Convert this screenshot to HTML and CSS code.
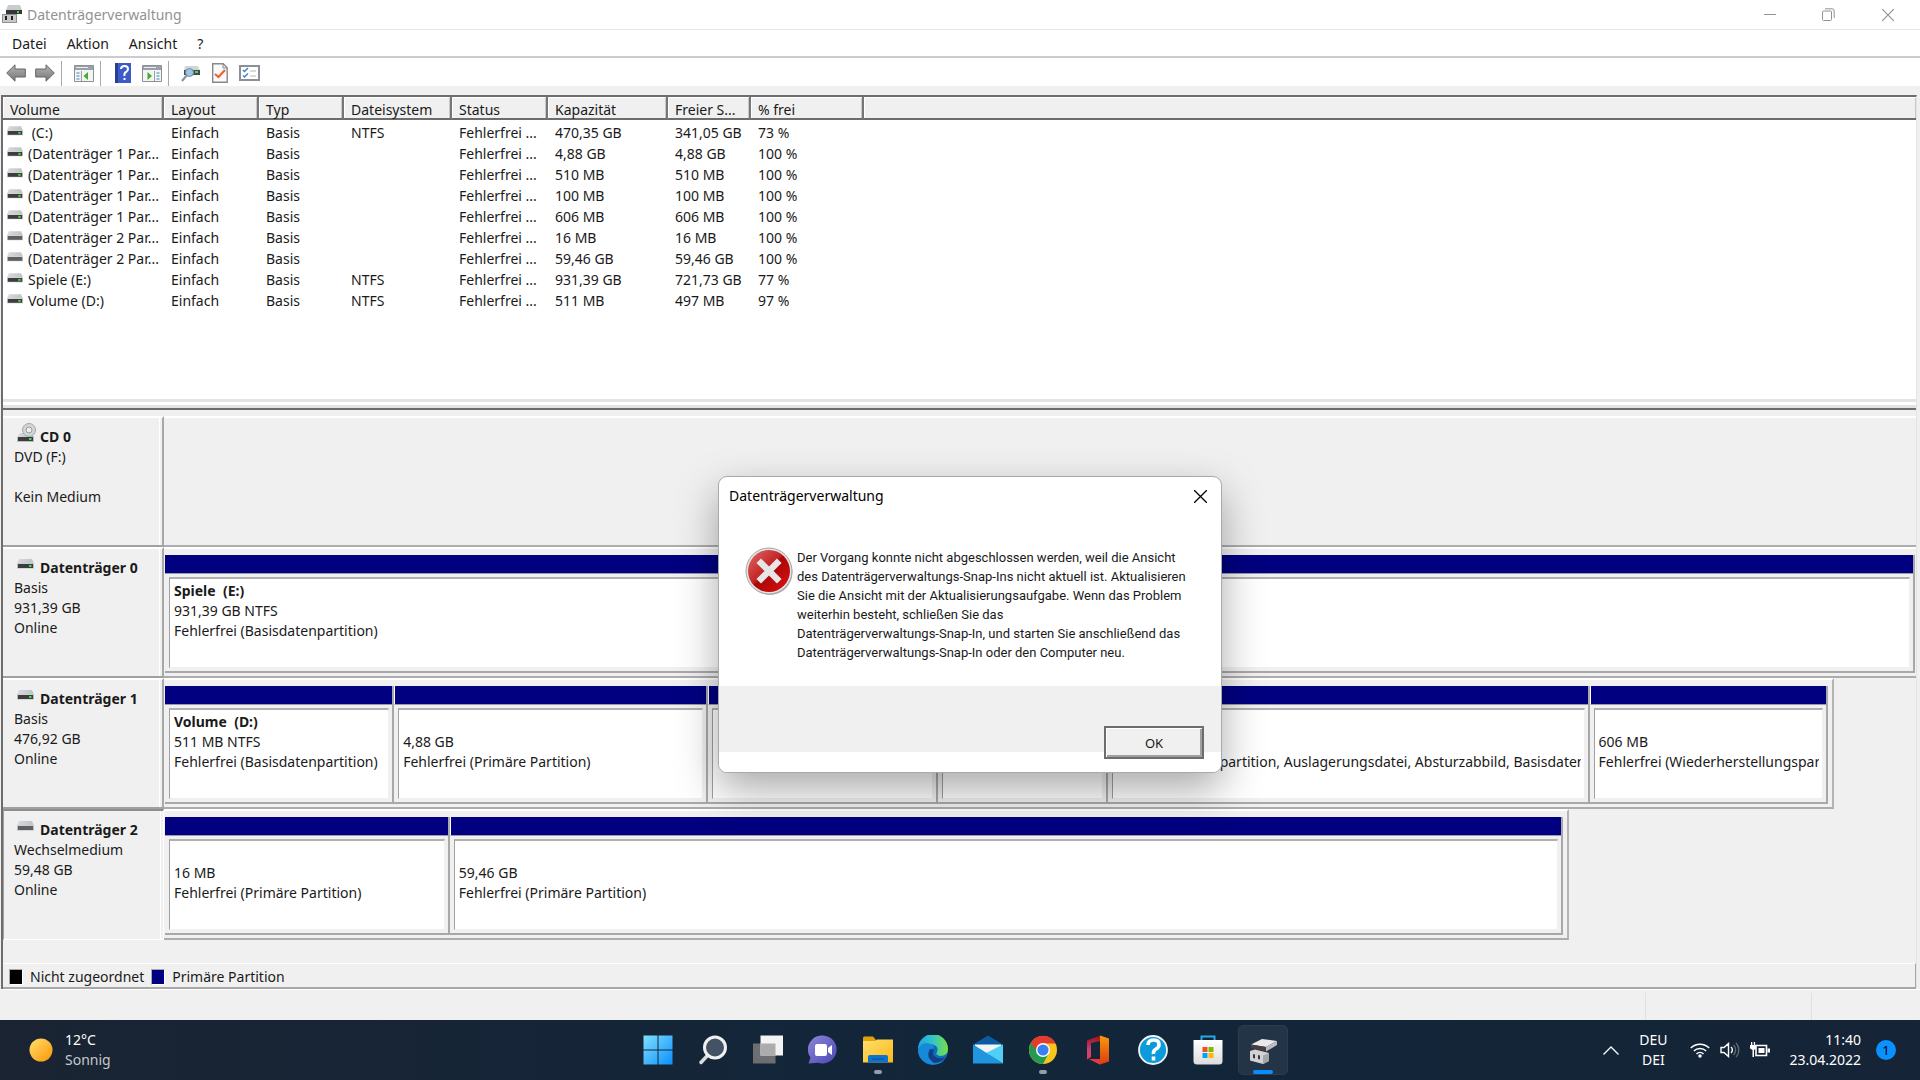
FILE: index.html
```html
<!DOCTYPE html>
<html lang="de">
<head>
  <meta charset="utf-8">
  <meta name="viewport" content="width=device-width, initial-scale=1">
  <title>Datenträgerverwaltung</title>
  <link rel="stylesheet" href="styles.css">
</head>
<body>
  <!-- Shared icons and gradients -->
  <svg class="sprite" aria-hidden="true">
    <defs>
      <linearGradient id="metal" x1="0" y1="0" x2="1" y2="0"><stop offset="0" stop-color="#d8dadd"/><stop offset="1" stop-color="#bfc3c6"/></linearGradient>
      <linearGradient id="arrow" x1="0" y1="0" x2="0" y2="1"><stop offset="0" stop-color="#b4b4b4"/><stop offset="1" stop-color="#777"/></linearGradient>
      <linearGradient id="win" x1="0" y1="0" x2="1" y2="1"><stop offset="0" stop-color="#7fe0ff"/><stop offset="1" stop-color="#0c8ffb"/></linearGradient>
      <linearGradient id="folder" x1="0" y1="0" x2="1" y2="1"><stop offset="0" stop-color="#ffdf70"/><stop offset="1" stop-color="#fbb914"/></linearGradient>
      <linearGradient id="chat" x1="0" y1="0" x2="1" y2="1"><stop offset="0" stop-color="#8b87d8"/><stop offset="1" stop-color="#4c47b5"/></linearGradient>
      <linearGradient id="edge" x1="0" y1="0" x2="1" y2="0"><stop offset="0" stop-color="#1fa5e8"/><stop offset=".5" stop-color="#35c5c5"/><stop offset="1" stop-color="#78e03d"/></linearGradient>
      <linearGradient id="sun" x1="0" y1="0" x2="1" y2="1"><stop offset="0" stop-color="#ffdf6b"/><stop offset="1" stop-color="#fd9507"/></linearGradient>
      <linearGradient id="office" x1="0" y1="0" x2="0" y2="1"><stop offset="0" stop-color="#f99a0c"/><stop offset="1" stop-color="#dc3a12"/></linearGradient>
      <linearGradient id="office2" x1="0" y1="0" x2="0" y2="1"><stop offset="0" stop-color="#9c0d10"/><stop offset=".6" stop-color="#c8437c"/><stop offset="1" stop-color="#f03a4a"/></linearGradient>
      <linearGradient id="error" x1="0" y1="0" x2="1" y2="1"><stop offset="0" stop-color="#e46a6a"/><stop offset=".45" stop-color="#c22424"/><stop offset=".5" stop-color="#a80808"/><stop offset="1" stop-color="#e01010"/></linearGradient>
      <linearGradient id="bag" x1="0" y1="0" x2="0" y2="1"><stop offset="0" stop-color="#fff"/><stop offset="1" stop-color="#dcdcdc"/></linearGradient>
    </defs>
    <symbol id="drive" viewBox="0 0 17 10">
      <path d="M2 0h13l2 4.500H0z" fill="url(#metal)"/>
      <path d="M0 4.500h17V9.500H0z" fill="#b9bcbf"/>
      <path d="M1 5h15v4H1z" fill="#3c3d40"/>
      <path d="M12 6h2.500v2H12z" fill="#3be03b"/>
    </symbol>
    <symbol id="removable" viewBox="0 0 17 10">
      <path d="M2 0h13l2 4.500H0z" fill="url(#metal)"/>
      <path d="M0 4.500h17V9.500H0z" fill="#b9bcbf"/>
      <path d="M1 5h15v4H1z" fill="#5f6062"/>
    </symbol>
    <symbol id="optical" viewBox="0 0 19 20">
      <path d="M3 10h11l3 4H0z" fill="url(#metal)"/>
      <circle cx="12" cy="7" r="6.500" fill="#d3d6d8" stroke="#a3a6a8"/>
      <circle cx="12" cy="7" r="3" fill="#eee" stroke="#9a9da0"/>
      <path d="M0 14h17v5H0z" fill="#b9bcbf"/>
      <path d="M1 14h15v4H1z" fill="#3c3d40"/>
      <path d="M12 15h2.500v2H12z" fill="#3be03b"/>
    </symbol>
    <symbol id="close" viewBox="0 0 12 12"><path d="M0 0l12 12M12 0L0 12" fill="none" stroke="currentColor" stroke-width="1.200"/></symbol>
  </svg>

  <main class="window">
    <header class="titlebar">
      <svg class="app-icon" viewBox="0 0 20 19" aria-hidden="true">
        <path d="M6 0h12l2 5H4z" fill="#c9cccf"/>
        <path d="M4 5h16v4H4z" fill="#35373a"/>
        <path d="M15 6h2v2h-2z" fill="#3be03b"/>
        <path d="M0 9h15v9H0z" fill="#8f8f92"/>
        <path d="M1 10h13v7H1z" fill="#c9c9cc"/>
        <path d="M3 11h2v4H3zM9 11h2v4H9z" fill="#222"/>
      </svg>
      <h1>Datenträgerverwaltung</h1>
      <div class="window-buttons">
        <button type="button" aria-label="Minimieren"><svg width="12" height="12" viewBox="0 0 12 12"><path d="M0 5.500h12" stroke="currentColor"/></svg></button>
        <button type="button" aria-label="Verkleinern"><svg width="13" height="13" viewBox="0 0 13 13" fill="none" stroke="currentColor"><rect x=".5" y="3" width="9" height="9.500" rx="1"/><path d="M3 .8h7a2.200 2.200 0 0 1 2.200 2.200v7"/></svg></button>
        <button type="button" aria-label="Schließen"><svg width="12" height="12"><use href="#close"/></svg></button>
      </div>
    </header>

    <nav class="menubar" aria-label="Menü">
      <button type="button">Datei</button>
      <button type="button">Aktion</button>
      <button type="button">Ansicht</button>
      <button type="button">?</button>
    </nav>

    <div class="toolbar" role="toolbar" aria-label="Werkzeuge">
      <button type="button" aria-label="Zurück"><svg width="20" height="18" viewBox="0 0 20 18"><path d="M.7 9L9 .8V5h10.300v8H9v4.200z" fill="url(#arrow)" stroke="#666"/></svg></button>
      <button type="button" aria-label="Vorwärts"><svg width="20" height="18" viewBox="0 0 20 18"><path d="M19.300 9L11 .8V5H.7v8H11v4.200z" fill="url(#arrow)" stroke="#666"/></svg></button>
      <span class="separator"></span>
      <button type="button" aria-label="Konsolenstruktur">
        <svg width="20" height="17" viewBox="0 0 20 17"><path d="M.5.5h19v16H.5z" fill="#f4f4f4" stroke="#8b9096"/><path d="M1 1h18v4H1z" fill="#9ba1a8"/><path d="M2 2.500h12M7 6v10" stroke="#e9ebee"/><path d="M7.500 6v10" stroke="#9ba1a8"/><path d="M2.500 8h3M2.500 11h3M2.500 14h3" stroke="#3a83c4"/><path d="M14 7v8l-4.500-4z" fill="#3fae2a"/></svg>
      </button>
      <span class="separator"></span>
      <button type="button" aria-label="Hilfe">
        <svg width="16" height="20" viewBox="0 0 16 20"><path d="M0 0h16v20H0z" fill="#3c5bc8"/><path d="M0 0h3v20H0z" fill="#2a3f94"/><path d="M6 6q0-3 3.500-3t3.500 3q0 2-2 3t-1.500 4M9.500 15v2" fill="none" stroke="#fff" stroke-width="2"/></svg>
      </button>
      <button type="button" aria-label="Aktionsbereich">
        <svg width="20" height="17" viewBox="0 0 20 17"><path d="M.5.5h19v16H.5z" fill="#f4f4f4" stroke="#8b9096"/><path d="M1 1h18v4H1z" fill="#9ba1a8"/><path d="M2 2.500h12" stroke="#e9ebee"/><path d="M12.500 6v10" stroke="#9ba1a8"/><path d="M14.500 8h3M14.500 11h3M14.500 14h3" stroke="#3a83c4"/><path d="M5.500 7v8l4.500-4z" fill="#3fae2a"/></svg>
      </button>
      <span class="separator"></span>
      <button type="button" aria-label="Datenträger suchen">
        <svg width="20" height="17" viewBox="0 0 20 17"><path d="M4 1h13l2 5H3z" fill="#d2d5d8"/><path d="M3 5h16v5H3z" fill="#47494c"/><path d="M14 6h3v2h-3z" fill="#3be03b"/><path d="M6 10l-5 6" stroke="#85929d" stroke-width="2"/><circle cx="8.500" cy="7.500" r="4" fill="#9bc6e5" stroke="#6f8da5"/></svg>
      </button>
      <button type="button" aria-label="Eigenschaften">
        <svg width="16" height="20" viewBox="0 0 16 20"><path d="M.7.7h10.500l4 4v14.500H.7z" fill="#fafafa" stroke="#85888c" stroke-width="1.400"/><path d="M11 1v4h4" fill="none" stroke="#85888c"/><path d="M3 11l3.500 3L13 7" fill="none" stroke="#ee6428" stroke-width="2.200"/></svg>
      </button>
      <button type="button" aria-label="Liste">
        <svg width="21" height="16" viewBox="0 0 21 16"><path d="M1 1h19v14H1z" fill="#fff" stroke="#8b9096" stroke-width="2"/><path d="M4 5l1.500 1.500L9 3M4 10.500L5.500 12 9 8.500" fill="none" stroke="#3585d0" stroke-width="1.500"/><path d="M11 6h6M11 11h6" stroke="#b5b5b5"/></svg>
      </button>
    </div>

    <div class="panes">
      <section class="volume-list" aria-label="Volumes">
        <table>
          <colgroup>
            <col class="col-volume"><col class="col-layout"><col class="col-type"><col class="col-fs"><col class="col-status"><col class="col-capacity"><col class="col-free"><col class="col-percent"><col>
          </colgroup>
          <thead>
            <tr><th>Volume</th><th>Layout</th><th>Typ</th><th>Dateisystem</th><th>Status</th><th>Kapazität</th><th>Freier S...</th><th>% frei</th><th></th></tr>
          </thead>
          <tbody>
            <tr><td><svg><use href="#drive"/></svg>&nbsp;(C:)</td><td>Einfach</td><td>Basis</td><td>NTFS</td><td>Fehlerfrei ...</td><td>470,35 GB</td><td>341,05 GB</td><td>73 %</td><td></td></tr>
            <tr><td><svg><use href="#drive"/></svg>(Datenträger 1 Par...</td><td>Einfach</td><td>Basis</td><td></td><td>Fehlerfrei ...</td><td>4,88 GB</td><td>4,88 GB</td><td>100 %</td><td></td></tr>
            <tr><td><svg><use href="#drive"/></svg>(Datenträger 1 Par...</td><td>Einfach</td><td>Basis</td><td></td><td>Fehlerfrei ...</td><td>510 MB</td><td>510 MB</td><td>100 %</td><td></td></tr>
            <tr><td><svg><use href="#drive"/></svg>(Datenträger 1 Par...</td><td>Einfach</td><td>Basis</td><td></td><td>Fehlerfrei ...</td><td>100 MB</td><td>100 MB</td><td>100 %</td><td></td></tr>
            <tr><td><svg><use href="#drive"/></svg>(Datenträger 1 Par...</td><td>Einfach</td><td>Basis</td><td></td><td>Fehlerfrei ...</td><td>606 MB</td><td>606 MB</td><td>100 %</td><td></td></tr>
            <tr><td><svg><use href="#removable"/></svg>(Datenträger 2 Par...</td><td>Einfach</td><td>Basis</td><td></td><td>Fehlerfrei ...</td><td>16 MB</td><td>16 MB</td><td>100 %</td><td></td></tr>
            <tr><td><svg><use href="#removable"/></svg>(Datenträger 2 Par...</td><td>Einfach</td><td>Basis</td><td></td><td>Fehlerfrei ...</td><td>59,46 GB</td><td>59,46 GB</td><td>100 %</td><td></td></tr>
            <tr><td><svg><use href="#drive"/></svg>Spiele (E:)</td><td>Einfach</td><td>Basis</td><td>NTFS</td><td>Fehlerfrei ...</td><td>931,39 GB</td><td>721,73 GB</td><td>77 %</td><td></td></tr>
            <tr><td><svg><use href="#drive"/></svg>Volume (D:)</td><td>Einfach</td><td>Basis</td><td>NTFS</td><td>Fehlerfrei ...</td><td>511 MB</td><td>497 MB</td><td>97 %</td><td></td></tr>
          </tbody>
        </table>
      </section>

      <section class="disks" aria-label="Datenträger">
        <article class="disk">
          <div class="disk-label">
            <h2><svg class="optical"><use href="#optical"/></svg>CD 0</h2>
            <p>DVD (F:)</p>
            <p>&nbsp;</p>
            <p>Kein Medium</p>
          </div>
          <div class="track" style="width: 100%"></div>
        </article>

        <article class="disk">
          <div class="disk-label">
            <h2><svg><use href="#drive"/></svg>Datenträger 0</h2>
            <p>Basis</p>
            <p>931,39 GB</p>
            <p>Online</p>
          </div>
          <div class="track" style="width: 100%">
            <div class="partition" style="flex-grow: 100">
              <div class="bar"></div>
              <div class="info"><h3>Spiele&nbsp; (E:)</h3><p>931,39 GB NTFS</p><p>Fehlerfrei (Basisdatenpartition)</p></div>
            </div>
          </div>
        </article>

        <article class="disk">
          <div class="disk-label">
            <h2><svg><use href="#drive"/></svg>Datenträger 1</h2>
            <p>Basis</p>
            <p>476,92 GB</p>
            <p>Online</p>
          </div>
          <div class="track" style="width: 95.3%">
            <div class="partition" style="flex-grow: 229">
              <div class="bar"></div>
              <div class="info"><h3>Volume&nbsp; (D:)</h3><p>511 MB NTFS</p><p>Fehlerfrei (Basisdatenpartition)</p></div>
            </div>
            <div class="partition" style="flex-grow: 314">
              <div class="bar"></div>
              <div class="info"><h3>&nbsp;</h3><p>4,88 GB</p><p>Fehlerfrei (Primäre Partition)</p></div>
            </div>
            <div class="partition" style="flex-grow: 230">
              <div class="bar"></div>
              <div class="info"></div>
            </div>
            <div class="partition" style="flex-grow: 170">
              <div class="bar"></div>
              <div class="info"></div>
            </div>
            <div class="partition" style="flex-grow: 483">
              <div class="bar"></div>
              <div class="info"><h3>&nbsp;</h3><p>470,35 GB NTFS</p><p>Fehlerfrei (Startpartition, Auslagerungsdatei, Absturzabbild, Basisdatenpartition)</p></div>
            </div>
            <div class="partition" style="flex-grow: 238">
              <div class="bar"></div>
              <div class="info"><h3>&nbsp;</h3><p>606 MB</p><p>Fehlerfrei (Wiederherstellungspartition)</p></div>
            </div>
          </div>
        </article>

        <article class="disk selected">
          <div class="disk-label">
            <h2><svg><use href="#removable"/></svg>Datenträger 2</h2>
            <p>Wechselmedium</p>
            <p>59,48 GB</p>
            <p>Online</p>
          </div>
          <div class="track" style="width: 80.2%">
            <div class="partition" style="flex-grow: 284">
              <div class="bar"></div>
              <div class="info"><h3>&nbsp;</h3><p>16 MB</p><p>Fehlerfrei (Primäre Partition)</p></div>
            </div>
            <div class="partition" style="flex-grow: 1116">
              <div class="bar"></div>
              <div class="info"><h3>&nbsp;</h3><p>59,46 GB</p><p>Fehlerfrei (Primäre Partition)</p></div>
            </div>
          </div>
        </article>
      </section>

      <footer class="legend">
        <span class="swatch unallocated"></span>Nicht zugeordnet
        <span class="swatch primary"></span>Primäre Partition
      </footer>
    </div>

    <div class="statusbar"><span></span><span></span><span></span></div>
  </main>

  <section class="dialog" role="alertdialog" aria-labelledby="dialog-title" aria-describedby="dialog-text">
    <header>
      <h2 id="dialog-title">Datenträgerverwaltung</h2>
      <button type="button" aria-label="Schließen"><svg width="13" height="13"><use href="#close"/></svg></button>
    </header>
    <div class="message">
      <svg width="48" height="48" viewBox="0 0 48 48" aria-hidden="true">
        <circle cx="25" cy="25.500" r="22.500" fill="#b5b5b5"/>
        <circle cx="24" cy="24" r="23" fill="#e4e4e4" stroke="#a4a4a4"/>
        <circle cx="24" cy="24" r="21" fill="url(#error)"/>
        <path d="M16 16l16 16M32 16L16 32" stroke="#e6e6e6" stroke-width="6.500" stroke-linecap="square"/>
      </svg>
      <p id="dialog-text">Der Vorgang konnte nicht abgeschlossen werden, weil die Ansicht<br>des Datenträgerverwaltungs-Snap-Ins nicht aktuell ist. Aktualisieren<br>Sie die Ansicht mit der Aktualisierungsaufgabe. Wenn das Problem<br>weiterhin besteht, schließen Sie das<br>Datenträgerverwaltungs-Snap-In, und starten Sie anschließend das<br>Datenträgerverwaltungs-Snap-In oder den Computer neu.</p>
    </div>
    <div class="actions"><button type="button">OK</button></div>
  </section>

  <footer class="taskbar">
    <button type="button" class="weather">
      <svg width="24" height="24" viewBox="0 0 24 24" aria-hidden="true"><circle cx="12" cy="12" r="11.500" fill="url(#sun)"/></svg>
      <span>12°C<br><span class="muted">Sonnig</span></span>
    </button>

    <div class="apps">
      <button type="button" aria-label="Start"><svg viewBox="0 0 30 30"><path d="M.5.500h14v14H.5zM15.500.500h14v14h-14zM.5 15.500h14v14H.5zM15.500 15.500h14v14h-14z" fill="url(#win)"/></svg></button>
      <button type="button" aria-label="Suche"><svg viewBox="0 0 30 30"><path d="M9.500 20.500L3 27.500" stroke="#d9dcde" stroke-width="3.500" stroke-linecap="round"/><circle cx="17" cy="12.500" r="10.500" fill="#435365" stroke="#f0f0f0" stroke-width="3"/></svg></button>
      <button type="button" aria-label="Taskansicht"><svg viewBox="0 0 30 30"><path d="M0 8.500h22.500v20H0z" fill="#6e6e70"/><path d="M7.500.500H30v20H7.500z" fill="#f3f3f3"/><path d="M7.500 8.500h15v12h-15z" fill="#acacae"/></svg></button>
      <button type="button" aria-label="Chat"><svg viewBox="0 0 30 30"><path d="M15 .500a14 14 0 1 1-5 27.200L.5 28.500l2-6A14 14 0 0 1 15 .500z" fill="url(#chat)"/><rect x="7" y="9" width="12" height="12" rx="2" fill="#fff"/><path d="M20 13l4-3v10l-4-3z" fill="#fff"/></svg></button>
      <button type="button" class="running" aria-label="Explorer"><svg viewBox="0 0 30 30"><path d="M0 3q0-1.500 1.500-1.500H10l3 3.500v6H0z" fill="#e0a10b"/><path d="M0 6h12l2-1.500h16V27.500H0z" fill="url(#folder)"/><path d="M5 27.500V22q0-2 2-2h16q2 0 2 2v5.500z" fill="#0c73ca"/><path d="M9 24h12" stroke="#054a94"/></svg></button>
      <button type="button" aria-label="Edge"><svg viewBox="0 0 30 30"><circle cx="15" cy="15" r="15" fill="#0f6cbd"/><path d="M0 14A15 15 0 0 1 30 14q0 7-8 7-5-1-3-4 2-5-3-7Q8 7 0 14z" fill="url(#edge)"/><path d="M0 15q2-7 9-7 7 1 7 5-7 1-4 8 4 8 14 5-9 6-18 2Q0 23 0 15z" fill="#168ad8"/><path d="M12 14q-5 8 4 14 7 0 11-6-6 3-11-1-2-2 0-6z" fill="#123f83"/></svg></button>
      <button type="button" aria-label="Mail"><svg viewBox="0 0 30 30"><path d="M0 9.500L15 .500l15 9v5H0z" fill="#0c59a4"/><path d="M2 9.500h26v10H2z" fill="#f3f3f3"/><path d="M0 9.500L15 19 0 28.500z" fill="#2aa5e5"/><path d="M30 9.500v19L13 18z" fill="#4fd0f8"/><path d="M0 28.500v-19L30 28.500z" fill="#2196e0"/></svg></button>
      <button type="button" class="running" aria-label="Chrome"><svg viewBox="0 0 30 30"><circle cx="15" cy="15" r="14" fill="#f9c51d"/><path d="M15 15L2.900 8A14 14 0 0 0 15 29l6-11z" fill="#229a50"/><path d="M15 15L2.900 8A14 14 0 0 1 27.100 8H15z" fill="#e33b2e"/><path d="M5 10l6 9 4-10z" fill="#229a50"/><path d="M2.900 8A14 14 0 0 1 27.600 8.500H15L9 16z" fill="#e33b2e"/><circle cx="15" cy="15" r="7" fill="#fff"/><circle cx="15" cy="15" r="5.600" fill="#397ff0"/></svg></button>
      <button type="button" aria-label="Office"><svg viewBox="0 0 30 30"><path d="M17 .500L4 5.500v19l4-2.500V8l9-2z" fill="url(#office2)"/><path d="M17 .500l9 3v23l-9 3-11-5.500h11z" fill="url(#office)"/><path d="M6 24h11v5.500z" fill="#e93542"/></svg></button>
      <button type="button" aria-label="Tipps"><svg viewBox="0 0 30 30"><circle cx="15" cy="15" r="14" fill="#0b9bdb" stroke="#f3f3f3" stroke-width="1.800"/><path d="M10 10q0-5 5.500-5T21 9.500q0 3-3 4.500t-2.500 5M15.500 21.500v4" fill="none" stroke="#fff" stroke-width="3.600"/></svg></button>
      <button type="button" aria-label="Microsoft Store"><svg viewBox="0 0 30 30"><path d="M8.500 7V1.500h13V7" fill="none" stroke="#28a9ea" stroke-width="2"/><path d="M.5 5h29v21q0 3.500-3.500 3.500H4Q.5 29.500.5 26z" fill="url(#bag)"/><path d="M9.500 12h5v5h-5z" fill="#f25022"/><path d="M15.500 12h5v5h-5z" fill="#7fba00"/><path d="M9.500 18h5v5h-5z" fill="#00a4ef"/><path d="M15.500 18h5v5h-5z" fill="#ffb900"/></svg></button>
      <button type="button" class="running active" aria-label="Datenträgerverwaltung"><svg viewBox="0 0 30 30"><path d="M3 9.500L14 4l15 2-11 6z" fill="#e9e9eb"/><path d="M3 9.500L18 12v4.500L3 13z" fill="#453f40"/><path d="M18 12l11-6v4l-11 6.500z" fill="#bcbcbf"/><path d="M2 16l5-1.500L21 18v8l-6 3-13-3.500z" fill="#d2d2d4"/><path d="M15 20.500l6-2.500v8l-6 3z" fill="#a5a5a8"/><path d="M5 19l2 .5v4L5 23zM10 20l2 .5v4l-2-.5z" fill="#3a3a3c"/></svg></button>
    </div>

    <div class="tray">
      <button type="button" class="chevron" aria-label="Ausgeblendete Symbole"><svg width="16" height="9" viewBox="0 0 16 9"><path d="M.5 8.500L8 1l7.500 7.500" fill="none" stroke="#fff" stroke-width="1.300"/></svg></button>
      <button type="button" class="language">DEU<br>DEI</button>
      <button type="button" class="system" aria-label="Netzwerk, Ton, Akku">
        <svg width="20" height="16" viewBox="0 0 20 16" fill="none" stroke="#fff" stroke-width="1.500"><path d="M.8 6a13 13 0 0 1 18.400 0M3.800 9a9 9 0 0 1 12.400 0M6.500 12a5 5 0 0 1 7 0"/><circle cx="10" cy="14" r="1" fill="#fff"/></svg>
        <svg width="20" height="16" viewBox="0 0 20 16" fill="none" stroke="#fff" stroke-width="1.400"><path d="M1 5.500h3L8.500 1.500v13L4 10.500H1zM11 5a4 4 0 0 1 0 6"/><path d="M13.500 3a7 7 0 0 1 0 10M16 1a10 10 0 0 1 0 14" stroke="#5c6873"/></svg>
        <svg width="20" height="16" viewBox="0 0 20 16"><path d="M6 3.500h10.500v10H6z" fill="none" stroke="#fff" stroke-width="1.600"/><path d="M8.500 6h6v5h-6zM17.500 6.500H20v4h-2.500zM0 3h6v3.500L4 8v7H2.500V8L0 6.500zM1 0h1.300v3H1zM3.800 0h1.300v3H3.800z" fill="#fff"/></svg>
      </button>
      <button type="button" class="clock"><span>11:40<br>23.04.2022</span><span class="badge">1</span></button>
    </div>
  </footer>
</body>
</html>
```
FILE: styles.css
```css
* {
  box-sizing: border-box;
}

body {
  margin: 0;
  min-height: 100vh;
  display: flex;
  flex-direction: column;
  font-family: 'Segoe UI', 'Noto Sans', 'Open Sans', sans-serif;
  font-size: 14px;
  line-height: 20px;
  color: #1a1a1a;
  background-color: #f0f0f0;
}

h1,
h2,
h3,
p {
  margin: 0;
  font-size: inherit;
}

button {
  padding: 0;
  border: none;
  background: none;
  font: inherit;
  color: inherit;
}

svg {
  flex: none;
}

.sprite {
  position: absolute;
  width: 0;
  height: 0;
}

.window {
  flex: 1;
  display: flex;
  flex-direction: column;
}

/* Title bar */
.titlebar {
  display: flex;
  align-items: center;
  height: 30px;
  padding: 0 3px 0 2px;
  background-color: #fff;
  border-bottom: 1px solid #e8e8e8;
  color: #929292;
}

.app-icon {
  width: 20px;
  height: 19px;
  margin-right: 5px;
}

.titlebar h1 {
  flex: 1;
  font-weight: 400;
}

.window-buttons {
  display: flex;
}

.window-buttons button {
  display: flex;
  align-items: center;
  justify-content: center;
  width: 59px;
  height: 28px;
}

/* Menu and toolbar */
.menubar {
  display: flex;
  gap: 20px;
  height: 28px;
  padding: 2px 12px 0;
  background-color: #fff;
  border-bottom: 2px solid #cccccf;
}

.toolbar {
  display: flex;
  align-items: center;
  gap: 9px;
  height: 28px;
  padding: 2px 6px 0;
  background-color: #fff;
}

.toolbar button {
  display: flex;
  justify-content: center;
  min-width: 20px;
}

.separator {
  width: 1px;
  height: 25px;
  margin: 0 3px 0 -3px;
  background-color: #a9a9a9;
}

/* Volume list */
.panes {
  flex: 1;
  display: flex;
  flex-direction: column;
  margin: 9px 3px 0 1px;
  border-top: 2px solid #6d6d6d;
  border-left: 2px solid #6d6d6d;
  border-right: 1px solid #e3e3e3;
}

.volume-list {
  flex: 1;
  background-color: #fff;
  border-bottom: 9px double #e3e3e3;
}

.volume-list table {
  width: 100%;
  table-layout: fixed;
  border-collapse: separate;
  border-spacing: 0;
}

.col-volume { width: 161px; }
.col-layout { width: 95px; }
.col-type { width: 85px; }
.col-fs { width: 108px; }
.col-status { width: 96px; }
.col-capacity { width: 120px; }
.col-free { width: 83px; }
.col-percent { width: 113px; }

th,
td {
  padding: 0 0 0 7px;
  text-align: left;
  white-space: nowrap;
}

th {
  height: 23px;
  padding-top: 4px;
  background-color: #f0f0f0;
  border-right: 2px solid #777;
  border-bottom: 2px solid #6d6d6d;
  box-shadow: inset 1px 1px #fff, inset -1px 0 #c8c8c8;
  font-weight: 400;
  line-height: 17px;
}

th:last-child {
  border-right: none;
}

td {
  height: 21px;
  line-height: 21px;
}

tbody::before {
  content: '';
  display: block;
  height: 2px;
}

td:first-child {
  padding-left: 4px;
}

td svg {
  width: 16px;
  height: 10px;
  margin-right: 5px;
  vertical-align: 2px;
}

/* Disks */
.disks {
  padding-top: 6px;
  padding-bottom: 23px;
  border-top: 2px solid #6d6d6d;
}

.disk {
  display: grid;
  grid-template-columns: 161px 1fr;
  min-height: 131px;
}

.disk-label {
  padding: 9px 11px;
  border-top: 2px solid #fff;
  border-right: 2px solid #a8a8a8;
  border-bottom: 2px solid #a0a0a0;
  box-shadow: inset -2px 0 #f0f0f0, inset -3px 0 #fff;
}

.disk-label h2 {
  display: flex;
  align-items: center;
  height: 20px;
  padding-left: 3px;
}

.disk-label h2 svg {
  width: 17px;
  height: 10px;
  margin-right: 6px;
  margin-bottom: 8px;
}

.disk-label h2 .optical {
  width: 19px;
  height: 20px;
  margin-right: 4px;
}

.selected .disk-label {
  border: 1px solid #fff;
  border-top: 2px solid #8e8e8e;
  border-left: 1px solid #a0a0a0;
  padding-left: 10px;
}

.track {
  display: flex;
  padding: 6px 4px 3px 1px;
  border-top: 2px solid #fff;
  border-right: 2px solid #b4b4b4;
  border-bottom: 2px solid #acacac;
}

.disk:nth-child(-n+2) .track {
  padding-right: 1px;
  border-right: none;
}

.partition {
  flex: 1 1 0;
  min-width: 0;
  border-right: 2px solid #a8a8a8;
  border-bottom: 2px solid #a8a8a8;
}

.partition + .partition .bar {
  border-left: 1px solid #fff;
}

.bar {
  height: 19px;
  background-color: #000080;
  border-bottom: 1px solid #9a9aa8;
}

.info {
  height: 91px;
  margin: 3px 3px 3px 4px;
  padding: 2px 3px 2px 4px;
  border: 1px solid #f0f0f0;
  border-top: 2px solid #b0b0b0;
  border-left: 1px solid #a0a0a0;
  background-color: #fff;
}

.info h3,
.info p {
  overflow: hidden;
  white-space: nowrap;
}

.legend {
  display: flex;
  align-items: center;
  gap: 7px;
  height: 26px;
  padding: 2px 0 0 6px;
  border-top: 1px solid #fff;
  border-right: 1px solid #a8a8a8;
  border-bottom: 2px solid #a8a8a8;
}

.swatch {
  width: 14px;
  height: 16px;
  border: 1px solid #a8a8a8;
  border-right-color: #fff;
  border-bottom-color: #fff;
}

.unallocated {
  background-color: #000;
}

.primary {
  background-color: #000080;
}

.statusbar {
  display: flex;
  justify-content: flex-end;
  height: 31px;
  padding-top: 3px;
  border-top: 1px solid #fff;
}

.statusbar span {
  width: 166px;
  border-left: 1px solid #e0e0e0;
}

.statusbar span:last-child {
  width: 109px;
}

.statusbar span:first-child {
  flex: 1;
  border-left: none;
}

/* Error dialog */
.dialog {
  position: absolute;
  left: 718px;
  top: 476px;
  width: 504px;
  overflow: hidden;
  background-color: #fff;
  border: 1px solid #a9a9a9;
  border-radius: 9px;
  box-shadow: 0 16px 42px rgba(0, 0, 0, 0.34);
}

.dialog header {
  display: flex;
  align-items: center;
  justify-content: space-between;
  height: 38px;
  padding: 0 14px 0 10px;
  color: #000;
}

.dialog h2 {
  font-weight: 400;
}

.dialog header button {
  display: flex;
}

.message {
  display: flex;
  gap: 4px;
  padding: 32px 0 24px 26px;
  font-family: 'Segoe UI', Roboto, sans-serif;
  font-size: 13px;
  line-height: 19px;
}

.message p {
  padding-top: 1px;
  white-space: nowrap;
}

.actions {
  display: flex;
  justify-content: flex-end;
  padding: 40px 17px 13px;
  background: linear-gradient(#f0f0f0 66px, #fff 66px);
  font-size: 13px;
}

.actions button {
  width: 100px;
  height: 33px;
  background-color: #f0f0f0;
  border: 2px solid #6d6d6d;
  box-shadow: inset 1px 1px #fff, inset -2px -2px #a0a0a0;
}

/* Taskbar */
.taskbar {
  display: grid;
  grid-template-columns: 1fr auto 1fr;
  align-items: center;
  height: 60px;
  background: linear-gradient(90deg, #1a2433, #12263a 50%, #152436);
  color: #fff;
}

.weather {
  display: flex;
  align-items: center;
  gap: 12px;
  padding-left: 29px;
  text-align: left;
}

.muted {
  color: #c4c8cd;
}

.apps {
  display: flex;
  gap: 5px;
}

.apps button {
  position: relative;
  display: flex;
  align-items: center;
  justify-content: center;
  width: 50px;
  height: 50px;
  border-radius: 5px;
}

.apps svg {
  width: 30px;
  height: 30px;
}

.apps .running::after {
  content: '';
  position: absolute;
  bottom: 1px;
  width: 8px;
  height: 4px;
  border-radius: 2px;
  background-color: #979da5;
}

.apps .active {
  background-color: #233446;
  border: 1px solid #2c3c4c;
}

.apps .active::after {
  bottom: 0;
  width: 20px;
  background-color: #0a8dff;
}

.tray {
  display: flex;
  align-items: center;
  justify-content: flex-end;
  padding-right: 24px;
}

.chevron {
  margin-right: 20px;
}

.language {
  margin-right: 23px;
}

.system {
  display: flex;
  gap: 10px;
  margin-right: 19px;
}

.clock {
  display: flex;
  align-items: center;
  gap: 15px;
  text-align: right;
}

.badge {
  width: 20px;
  border-radius: 50%;
  background-color: #0a91ff;
  color: #000;
  font-size: 13px;
  text-align: center;
}
```
